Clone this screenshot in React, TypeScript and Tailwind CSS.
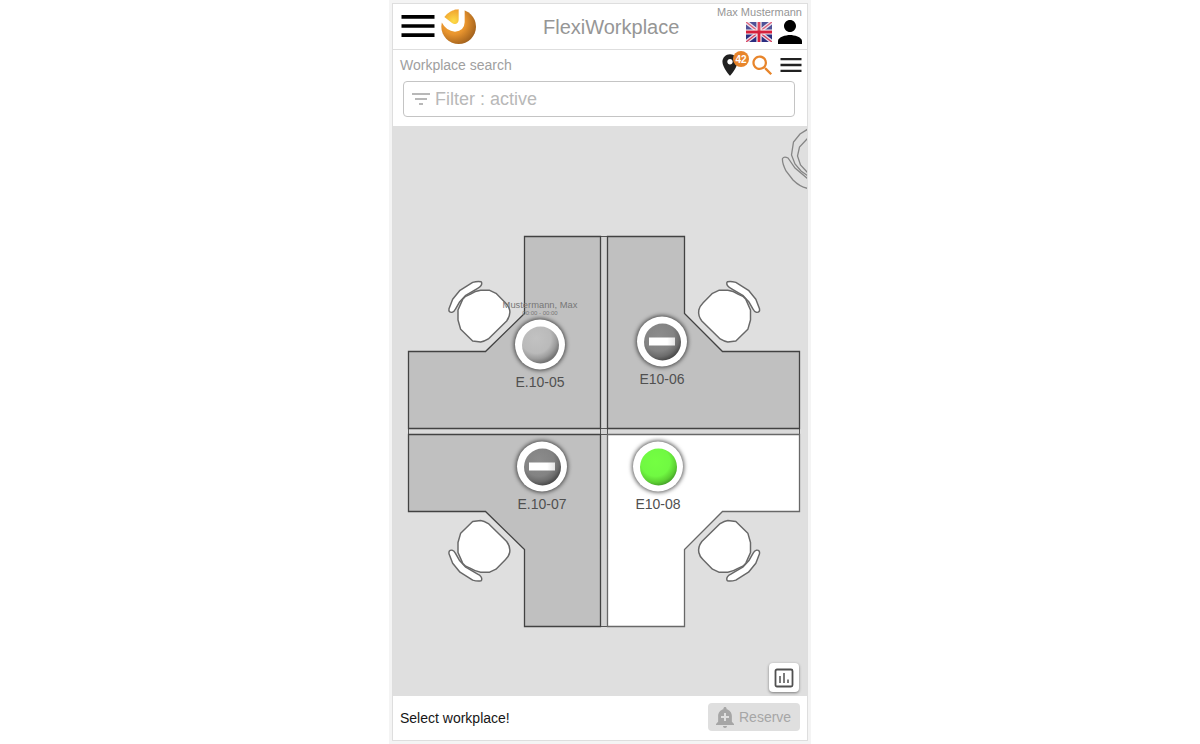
import React from "react";

type Status = "mine" | "blocked" | "free";
interface Workplace {
  id: string;
  x: number;
  y: number;
  status: Status;
  person?: string;
  time?: string;
}

const workplaces: Workplace[] = [
  { id: "E.10-05", x: 147, y: 219, status: "mine", person: "Mustermann, Max", time: "00:00 - 00:00" },
  { id: "E10-06", x: 269, y: 216, status: "blocked" },
  { id: "E.10-07", x: 149, y: 341, status: "blocked" },
  { id: "E10-08", x: 265, y: 341, status: "free" },
];

function Logo() {
  return (
    <svg className="mt-px ml-[6px] h-[36px] w-[36px]" viewBox="0 0 108 108">
      <defs>
        <radialGradient id="ball" cx="38" cy="40" r="72" gradientUnits="userSpaceOnUse">
          <stop offset="0" stopColor="#fbb034" />
          <stop offset="0.5" stopColor="#e8942e" />
          <stop offset="1" stopColor="#a0601c" />
        </radialGradient>
        <radialGradient id="core" cx="38" cy="36" r="36" gradientUnits="userSpaceOnUse">
          <stop offset="0" stopColor="#fddc48" />
          <stop offset="1" stopColor="#f0a02e" />
        </radialGradient>
      </defs>
      <circle cx="53" cy="53" r="52" fill="url(#ball)" />
      <path d="M0 40H2Q16 67 42 68Q70 66 71 40V0H50L0 14Z" fill="#fff" />
      <path d="M10 24Q26 3 53 1V32Q53 42 43 45Q38 46 33 42Z" fill="url(#core)" />
    </svg>
  );
}

function Flag() {
  return (
    <svg className="h-[20px] w-[26px]" viewBox="0 0 60 46" preserveAspectRatio="none">
      <rect width="60" height="46" fill="#2a2d80" />
      <path d="M0 0L60 46M60 0L0 46" stroke="#e6dcea" strokeWidth="9" />
      <path d="M0 0L60 46M60 0L0 46" stroke="#d8405c" strokeWidth="3" />
      <path d="M30 0V46M0 23H60" stroke="#f2ecf2" strokeWidth="12" />
      <path d="M30 0V46M0 23H60" stroke="#d5203c" strokeWidth="6.500" />
      <rect width="60" height="20" fill="#fff" opacity="0.18" />
    </svg>
  );
}

function Icon({ d, className }: { d: string; className: string }) {
  return (
    <svg viewBox="0 0 24 24" fill="currentColor" className={className}>
      <path d={d} />
    </svg>
  );
}

const MENU = "M3 18h18v-2H3v2zm0-5h18v-2H3v2zm0-7v2h18V6H3z";

function Chair() {
  return (
    <g fill="#fff" stroke="#686868" strokeWidth="4.4" strokeLinejoin="round">
      <path d="M123 35Q112 33 98 37L60 61L38 88L27 116Q25 128 36 127Q43 125 46 118L58 97L76 77L113 55Q127 48 125 38Z" />
      <path d="M90 73Q106 63 122 61L149 61L168 70L196 98Q207 109 209 120Q212 137 200 153L145 207Q132 215 122 216L98 213L62 178L54 150L54 120L68 88L77 79Z" />
    </g>
  );
}

function FloorPlan() {
  return (
    <svg viewBox="393 126 414 570" className="block h-[570px] w-[414px]">
      <g strokeWidth="1">
        <rect x="408.5" y="428.5" width="391" height="6" fill="#dadada" stroke="#555" />
        <rect x="600.5" y="236.5" width="7" height="390" fill="#d4d4d4" stroke="#555" />
        <path d="M600.5 428.5H607.5M600.5 434.5H607.5" stroke="#555" />
      </g>
      <g strokeWidth="1.3">
        <path fill="#c0c0c0" stroke="#424242" d="M524.5 236.5H600.5V428.5H408.5V351.5H485.5L524.5 313.5Z" />
        <path fill="#c0c0c0" stroke="#424242" d="M607.5 236.5H684.5V313.5L722.5 351.5H799.5V428.5H607.5Z" />
        <path fill="#c0c0c0" stroke="#424242" d="M408.5 434.5H600.5V626.5H524.5V549.5L485.5 511.5H408.5Z" />
        <path fill="#fff" stroke="#686868" d="M607.5 434.5H799.5V511.5H722.5L684.5 549.5V626.5H607.5Z" />
      </g>
      <g transform="translate(440 270) scale(.33333)"><Chair /></g>
      <g transform="translate(768.5 270) scale(-.33333 .33333)"><Chair /></g>
      <g transform="translate(440 592.5) scale(.33333 -.33333)"><Chair /></g>
      <g transform="translate(768.5 592.5) scale(-.33333 -.33333)"><Chair /></g>
      <g fill="none" stroke="#858585" strokeWidth="1.3">
        <path d="M808 129L800 134L793.5 142L791.5 155L795 164L801 171L808 176" />
        <path d="M808 138L799.5 147L797.5 156L800.5 165L808 173" />
        <path d="M808 188.500Q800 187 793 180L786 171Q782 163 782.500 158.500Q784 156 788 158L795 168L808 179" />
      </g>
    </svg>
  );
}

function Disc({ status }: { status: Status }) {
  if (status === "free")
    return <div className="size-[37px] rounded-full bg-[radial-gradient(circle_24px_at_42%_36%,#74ff42_0%,#70f942_60%,#5cd032_85%,#46a42a_100%)]" />;
  if (status === "mine")
    return <div className="size-[37px] rounded-full bg-[radial-gradient(circle_25px_at_38%_32%,#c2c2c2_0%,#bababa_60%,#9c9c9c_82%,#747474_100%)]" />;
  return (
    <div className="flex size-[37px] items-center justify-center rounded-full bg-[radial-gradient(circle_25px_at_40%_34%,#8c8c8c_0%,#838383_60%,#6c6c6c_82%,#484848_100%)]">
      <div className="h-[8px] w-[26px] bg-gradient-to-r from-white from-70% to-[#e4e4e4]" />
    </div>
  );
}

function Marker({ place }: { place: Workplace }) {
  return (
    <div className="absolute flex w-[100px] -translate-x-1/2 -translate-y-[25.5px] flex-col items-center" style={{ left: place.x, top: place.y }}>
      {place.person && (
        <div className="absolute -top-[20px] flex flex-col items-center whitespace-nowrap text-[#777]">
          <span className="text-[9.35px] leading-[10px]">{place.person}</span>
          <span className="text-[6px] leading-[6px]">{place.time}</span>
        </div>
      )}
      <div className="flex size-[50px] items-center justify-center rounded-full bg-white shadow-[0_0_4px_1px_rgba(0,0,0,0.65)]">
        <Disc status={place.status} />
      </div>
      <span className="mt-[3.5px] text-[14px] leading-[16px] text-[#505050]">{place.id}</span>
    </div>
  );
}

export default function App() {
  return (
    <div className="flex h-[744px] w-[1200px] justify-center overflow-hidden bg-white font-['Liberation_Sans',Arial,sans-serif]">
      <div className="w-[422px] bg-[#f4f4f4] px-[3px] pt-[3px]">
        <div className="flex h-[738px] w-[416px] flex-col border border-[#dedede] bg-white">
          <header className="flex h-[46px] shrink-0 items-center border-b border-[#dedede]">
            <div className="flex w-[150px] items-center pb-px pl-[3px]">
              <Icon d={MENU} className="size-[44px] shrink-0 text-black" />
              <div className="-ml-[5px] flex"><Logo /></div>
            </div>
            <h1 className="text-[20px] leading-[24px] text-[#969696]">FlexiWorkplace</h1>
            <div className="ml-auto flex flex-col items-end pr-[5px] pb-[3px]">
              <span className="text-[11px] leading-[12px] text-[#969696]">Max Mustermann</span>
              <div className="mt-[2px] flex items-center gap-[6px]">
                <Flag />
                <svg viewBox="4 4 16 16" className="size-[24px]"><path d="M12 12c2.210 0 4-1.790 4-4s-1.790-4-4-4-4 1.790-4 4 1.790 4 4 4zm0 2c-2.670 0-8 1.340-8 4v2h16v-2c0-2.660-5.330-4-8-4z" /></svg>
              </div>
            </div>
          </header>
          <div className="flex h-[31px] shrink-0 items-center justify-between pr-[2px] pl-[7px]">
            <span className="text-[14px] text-[#a0a0a0]">Workplace search</span>
            <div className="flex items-center pb-px">
              <div className="relative mr-[6px]">
                <Icon d="M12 2C8.130 2 5 5.130 5 9c0 5.250 7 13 7 13s7-7.750 7-13c0-3.870-3.130-7-7-7zm0 9.500c-1.380 0-2.500-1.120-2.500-2.500s1.120-2.500 2.500-2.500 2.500 1.120 2.500 2.500-1.120 2.500-2.500 2.500z" className="size-[26px] text-[#212121]" />
                <span className="absolute -top-px left-[16px] flex size-[16px] items-center justify-center rounded-full bg-[#e8852b] text-[10px] font-bold text-white">42</span>
              </div>
              <Icon d="M15.500 14h-.79l-.28-.27C15.410 12.590 16 11.110 16 9.500 16 5.910 13.090 3 9.500 3S3 5.910 3 9.500 5.910 16 9.500 16c1.610 0 3.090-.59 4.230-1.570l.27.28v.79l5 4.990L20.490 19l-4.990-5zm-6 0C7.010 14 5 11.990 5 9.500S7.010 5 9.500 5 14 7.010 14 9.500 11.990 14 9.500 14z" className="-mr-px size-[27px] text-[#e8852b]" />
              <Icon d={MENU} className="ml-[2px] size-[28px] text-[#212121]" />
            </div>
          </div>
          <div className="mx-[10px] flex h-[36px] w-[392px] shrink-0 items-center rounded-[4px] border border-[#c4c4c4] pb-px pl-[5px] text-[#b8b8b8]">
            <Icon d="M10 18h4v-2h-4v2zM3 6v2h18V6H3zm3 7h12v-2H6v2z" className="size-[24px]" />
            <span className="ml-[2px] text-[18px] leading-[20px]">Filter : active</span>
          </div>
          <main className="relative mt-[9px] h-[570px] shrink-0 overflow-hidden bg-[#dfdfdf]">
            <FloorPlan />
            {workplaces.map((place) => <Marker key={place.id} place={place} />)}
            <button className="absolute right-[8px] bottom-[4px] flex h-[29px] w-[30px] items-center justify-center rounded-[4px] bg-white shadow-[0_1px_3px_rgba(0,0,0,0.45)]">
              <svg viewBox="0 0 20 20" className="size-[20px]" fill="none">
                <rect x="1.500" y="1.500" width="17" height="17" rx="1.500" stroke="#505050" strokeWidth="1.800" />
                <path d="M6 8V15M10 5V15M14 11.500V15" stroke="#666" strokeWidth="1.700" />
              </svg>
            </button>
          </main>
          <footer className="flex flex-1 items-center justify-between pr-[7px] pl-[7px]">
            <span className="text-[14px] text-[#161616]">Select workplace!</span>
            <button className="mb-[3px] flex h-[28px] w-[92px] items-center rounded-[4px] bg-[#dfdfdf] pt-px pl-[5px] text-[#a6a6a6]">
              <Icon d="M10.010 21.010c0 1.100.89 1.990 1.990 1.990s1.990-.89 1.990-1.990h-3.980zM18.880 16.820V11c0-3.250-2.250-5.970-5.290-6.690v-.72C13.590 2.710 12.880 2 12 2s-1.590.71-1.590 1.590v.72C7.370 5.030 5.120 7.750 5.120 11v5.820L3 18.940V20h18v-1.060l-2.120-2.120zM16 13.010h-3v3h-2v-3H8V11h3V8h2v3h3v2.010z" className="size-[24px]" />
              <span className="ml-[2px] text-[14px]">Reserve</span>
            </button>
          </footer>
        </div>
      </div>
    </div>
  );
}
